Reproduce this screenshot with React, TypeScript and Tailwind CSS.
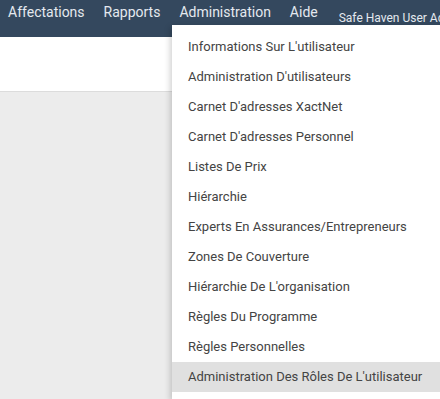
import React from "react";

const navItems = ["Affectations", "Rapports", "Administration", "Aide"];

const menuItems = [
  "Informations Sur L'utilisateur",
  "Administration D'utilisateurs",
  "Carnet D'adresses XactNet",
  "Carnet D'adresses Personnel",
  "Listes De Prix",
  "Hiérarchie",
  "Experts En Assurances/Entrepreneurs",
  "Zones De Couverture",
  "Hiérarchie De L'organisation",
  "Règles Du Programme",
  "Règles Personnelles",
  "Administration Des Rôles De L'utilisateur",
];

export default function App() {
  return (
    <div className="relative h-[399px] w-[440px] overflow-hidden bg-[#ececec] font-['Roboto',sans-serif]">
      {/* top bar */}
      <div className="flex h-[37px] items-start bg-[#34485e] pl-[8px] pt-[3px]">
        {navItems.map((item) => (
          <span key={item} className="mr-[19px] text-[14px] leading-[18px] text-[#e4e9ef]">
            {item}
          </span>
        ))}
        <span className="mt-[8px] ml-[2px] whitespace-nowrap text-[12px] leading-[14px] text-[#e4e9ef]">
          Safe Haven User Ad
        </span>
      </div>

      {/* page header strip */}
      <div className="h-[55px] border-b border-[#dcdcdc] bg-white" />

      {/* dropdown */}
      <div className="absolute left-[172px] top-[25px] w-[300px] bg-white py-[7px] shadow-[-2px_2px_6px_rgba(0,0,0,0.18)]">
        {menuItems.map((item, i) => (
          <div
            key={item}
            className={
              "flex h-[30px] items-center whitespace-nowrap pl-[16px] text-[13px] text-[#444] " +
              (i === 11 ? "bg-[#e0e0e0]" : "")
            }
          >
            {item}
          </div>
        ))}
      </div>
    </div>
  );
}
